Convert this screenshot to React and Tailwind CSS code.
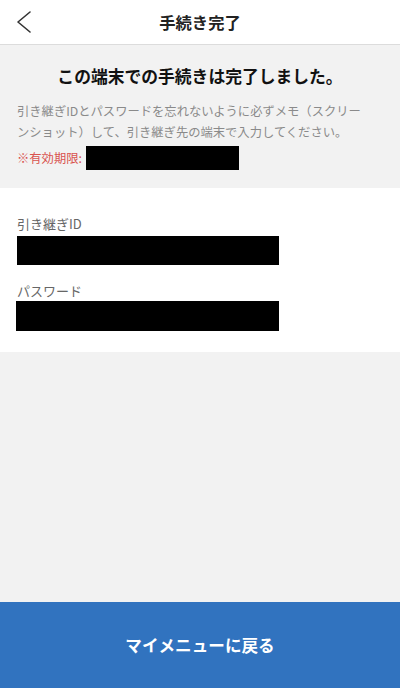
const font = { fontFamily: '"Noto Sans CJK JP", "Noto Sans", sans-serif' };

function BackIcon() {
  return (
    <svg width="16" height="22" viewBox="0 0 16 22" fill="none" aria-hidden="true">
      <polyline
        points="14,1 2,11 14,21"
        stroke="#333333"
        strokeWidth="1.6"
        strokeLinecap="round"
        strokeLinejoin="round"
      />
    </svg>
  );
}

function Redacted({ className }) {
  return <div className={`bg-black ${className}`} />;
}

export default function App() {
  return (
    <div
      className="flex min-h-screen w-full flex-col bg-[#f2f2f2] font-['Noto_Sans_CJK_JP',sans-serif] text-[#222]"
      style={font}
    >
      <header className="relative flex h-[45px] shrink-0 items-center justify-center border-b border-[#dcdcdc] bg-white">
        <button type="button" className="absolute left-[16px] top-[11px] flex">
          <BackIcon />
        </button>
        <h1 className="text-[16.3px] font-bold leading-none text-[#222]">手続き完了</h1>
      </header>

      <section className="px-[17px] pb-[18px] pt-[20px]">
        <h2 className="text-center text-[16.8px] font-bold leading-[22px] text-[#111]">
          この端末での手続きは完了しました。
        </h2>
        <p className="mt-[14px] text-[12.3px] leading-[21px] text-[#8a8a8a]">
          引き継ぎIDとパスワードを忘れないように必ずメモ（スクリー
          <br />
          ンショット）して、引き継ぎ先の端末で入力してください。
        </p>
        <div className="mt-[3px] flex h-[24px] items-center">
          <span className="text-[12.3px] leading-none text-[#d9534f]">※有効期限:</span>
          <Redacted className="ml-[4px] h-[24px] w-[153px]" />
        </div>
      </section>

      <section className="bg-white px-[17px] pb-[21px] pt-[27px]">
        <div className="h-[18px] text-[13px] leading-[18px] text-[#666]">引き継ぎID</div>
        <Redacted className="mt-[3px] h-[29px] w-[262px]" />
        <div className="mt-[17px] h-[18px] text-[13px] leading-[18px] text-[#666]">パスワード</div>
        <Redacted className="ml-[-1px] mt-[1px] h-[30px] w-[263px]" />
      </section>

      <div className="flex-1" />

      <button
        type="button"
        className="flex h-[86px] w-full shrink-0 items-center justify-center bg-[#3173bf] text-[16.6px] font-bold text-white"
      >
        マイメニューに戻る
      </button>
    </div>
  );
}
